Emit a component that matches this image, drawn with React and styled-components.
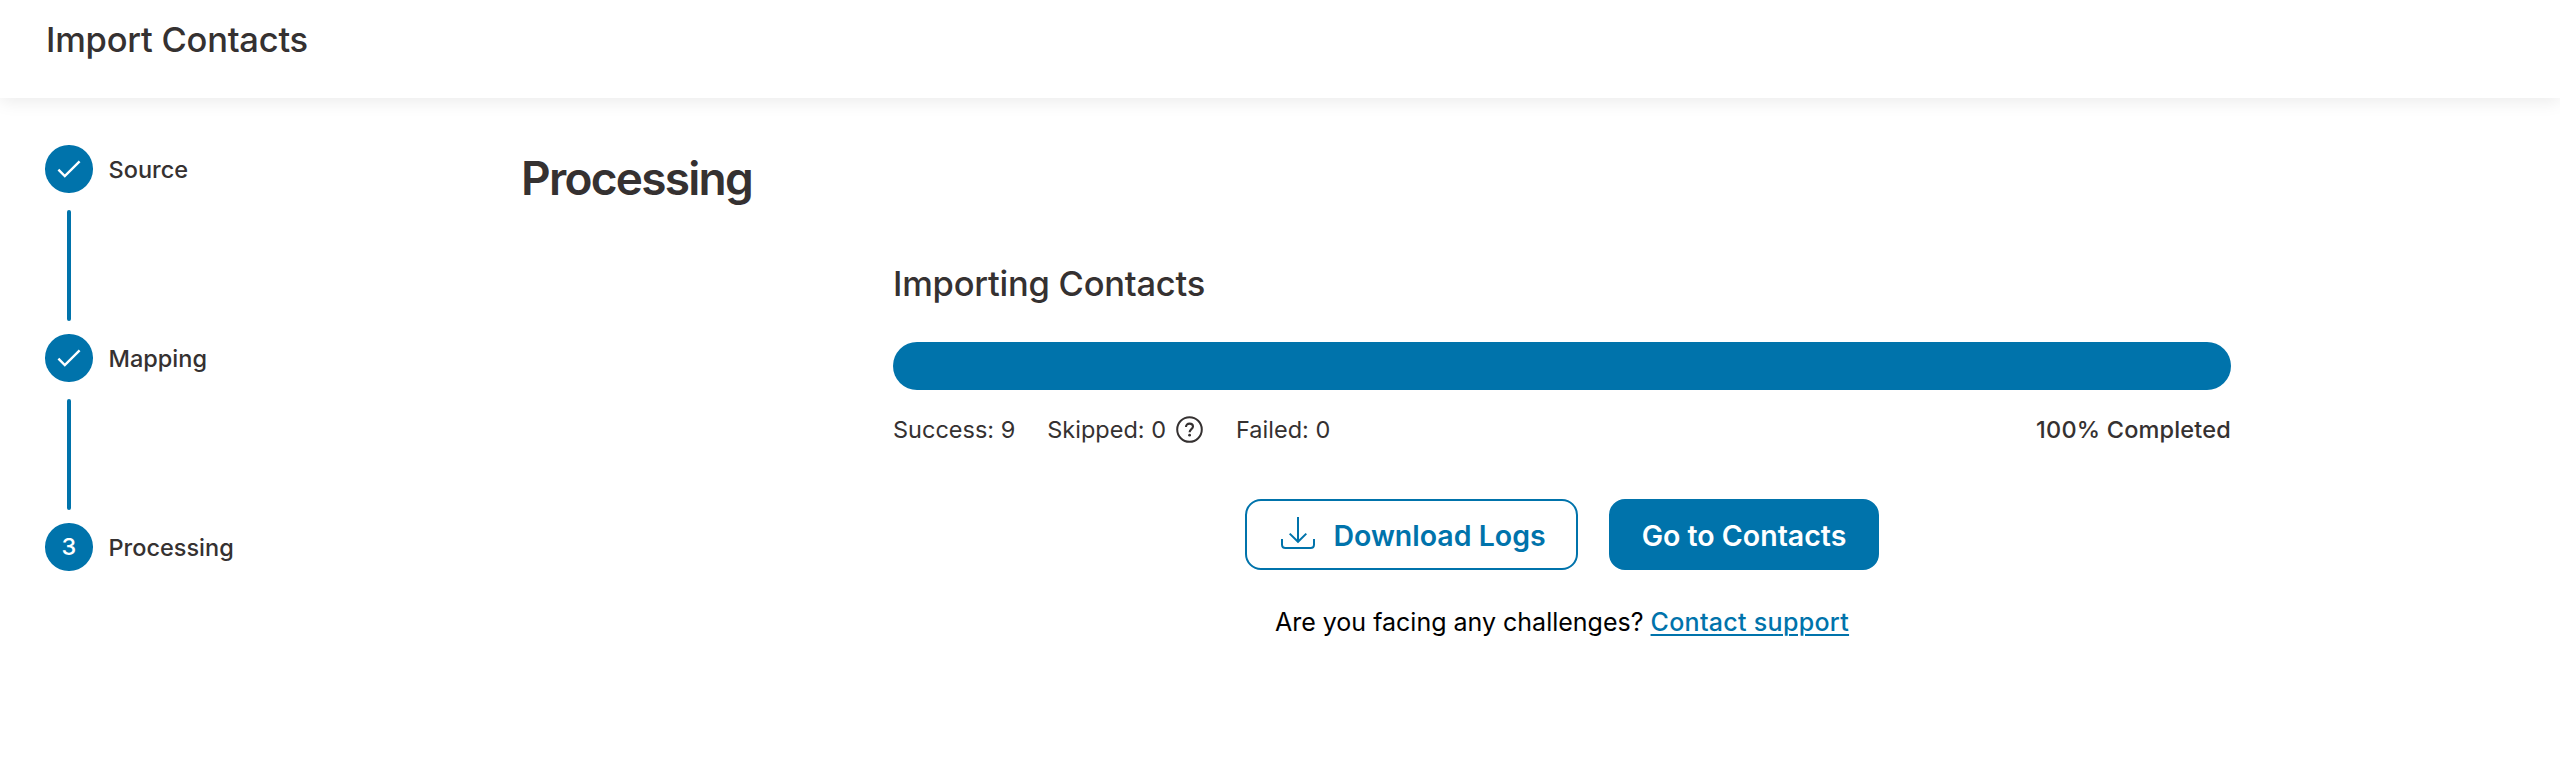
import React from 'react';
import styled, { createGlobalStyle } from 'styled-components';

const GlobalStyle = createGlobalStyle`
    * {
        box-sizing: border-box;
    }

    body {
        margin: 0;
        background: #fff;
        color: #353131;
        font-family: Inter, "Liberation Sans", sans-serif;
    }
`

const Page = styled.div`
    min-height: 765px;
    overflow: hidden;
`

const Header = styled.header`
    height: 98px;
    padding: 16px 46px;
    background: #fff;
    box-shadow: 0 4px 16px rgba(0, 0, 0, 0.08);
`

const Title = styled.h1`
    margin: 0;
    font-size: 34.5px;
    font-weight: 500;
    line-height: 48px;
    letter-spacing: -0.23px;
`

const Body = styled.div`
    display: flex;
    padding: 47px 0 0 45px;
`

const Steps = styled.div`
    flex: none;
    width: 476px;
    display: flex;
    flex-direction: column;
`

const Step = styled.div`
    display: flex;
    align-items: center;
    gap: 16px;
    height: 47.5px;
`

const StepCircle = styled.div`
    display: flex;
    align-items: center;
    justify-content: center;
    width: 47.5px;
    height: 47.5px;
    border-radius: 50%;
    background: #0073ab;
    color: #fff;
    font-size: 23.5px;
    font-weight: 500;
`

const StepLabel = styled.span`
    padding-top: 2px;
    font-size: 23.5px;
    font-weight: 500;
    line-height: 32px;
`

const StepLine = styled.div`
    width: 4px;
    height: 110.5px;
    margin: 17.5px 0 13.5px 22px;
    border-radius: 2px;
    background: #0073ab;
`

const Main = styled.main`
    flex: none;
    width: 2082px;
`

const Heading = styled.h2`
    margin: 0;
    font-size: 46px;
    font-weight: 600;
    line-height: 66px;
    letter-spacing: -1.75px;
`

const ImportPanel = styled.section`
    width: 1338px;
    margin: 50px auto 0;
    display: flex;
    flex-direction: column;
`

const PanelTitle = styled.h3`
    margin: 0;
    font-size: 34.5px;
    font-weight: 500;
    line-height: 46px;
    letter-spacing: -0.23px;
`

const ProgressTrack = styled.div`
    height: 47.5px;
    margin-top: 35px;
    border-radius: 24px;
    background: #e5eef3;
    overflow: hidden;
`

const ProgressBar = styled.div`
    height: 100%;
    background: #0073ab;
`

const Stats = styled.div`
    display: flex;
    align-items: center;
    gap: 32px;
    height: 32px;
    margin-top: 24px;
    font-size: 23.5px;
    line-height: 32px;
`

const Stat = styled.div`
    display: flex;
    align-items: center;
    gap: 10px;
`

const HelpBadge = styled.span`
    display: flex;
    margin-right: 1px;
`

const Completed = styled.div`
    margin-left: auto;
    font-weight: 500;
    letter-spacing: 0.18px;
`

const Actions = styled.div`
    display: flex;
    justify-content: center;
    gap: 31.5px;
    margin-top: 53.5px;
`

const Button = styled.button`
    display: flex;
    align-items: center;
    justify-content: center;
    gap: 18px;
    width: ${props => props.$width}px;
    height: 71px;
    padding: 3px 0 0;
    border: 2px solid #0073ab;
    border-radius: 16px;
    background: ${props => props.$primary ? '#0073ab' : '#fff'};
    color: ${props => props.$primary ? '#fff' : '#0073ab'};
    font-family: inherit;
    font-size: 28.5px;
    font-weight: 600;
    line-height: 40px;

    svg {
        margin: -6px 0 0 4px;
    }
`

const Support = styled.p`
    margin: 34px 0 0;
    color: #000;
    font-size: 25px;
    line-height: 36px;
    text-align: center;
`

const SupportLink = styled.a`
    color: #0073ab;
    font-weight: 500;
    letter-spacing: 0.3px;
    text-decoration: underline;
    text-decoration-thickness: 2px;
    text-underline-offset: 2.5px;
`

const CheckIcon = () => (
    <svg width="24" height="18" viewBox="0 0 24 18" fill="none">
        <path d="M1.4 9.6L7.8 16L22.6 1.4" stroke="#fff" strokeWidth="2.4"/>
    </svg>
);

const HelpIcon = () => (
    <svg width="27" height="27" viewBox="0 0 27 27" fill="none" stroke="#353131" strokeWidth="2">
        <circle cx="13.5" cy="13.5" r="12.3"/>
        <path d="M10 10.9C10 8.7 11.5 7.6 13.5 7.6C15.5 7.6 17 8.8 17 10.6C17 13.2 13.6 13.2 13.6 16.3" strokeWidth="2.1"/>
        <circle cx="13.6" cy="19.2" r="1.4" fill="#353131" stroke="none"/>
    </svg>
);

const DownloadIcon = () => (
    <svg width="34" height="32" viewBox="0 0 34 32" fill="none" stroke="#0073ab" strokeWidth="2">
        <path d="M17 0V25M8.7 16.6L17 24.8L25.3 16.6"/>
        <path d="M1 22V27.5C1 29.6 2.4 31 4.5 31H29.5C31.6 31 33 29.6 33 27.5V22"/>
    </svg>
);

const steps = [
    { label: 'Source', done: true },
    { label: 'Mapping', done: true },
    { label: 'Processing', done: false },
];

const progress = 100;

const renderStep = (step, index) => (
    <React.Fragment key={step.label}>
        {index > 0 && <StepLine/>}
        <Step>
            <StepCircle>{step.done ? <CheckIcon/> : index + 1}</StepCircle>
            <StepLabel>{step.label}</StepLabel>
        </Step>
    </React.Fragment>
);

export default function App() {
    return (
        <Page>
            <GlobalStyle/>
            <Header>
                <Title>Import Contacts</Title>
            </Header>
            <Body>
                <Steps>{steps.map(renderStep)}</Steps>
                <Main>
                    <Heading>Processing</Heading>
                    <ImportPanel>
                        <PanelTitle>Importing Contacts</PanelTitle>
                        <ProgressTrack>
                            <ProgressBar style={{ width: `${progress}%` }}/>
                        </ProgressTrack>
                        <Stats>
                            <Stat>Success: 9</Stat>
                            <Stat>Skipped: 0 <HelpBadge><HelpIcon/></HelpBadge></Stat>
                            <Stat>Failed: 0</Stat>
                            <Completed>{progress}% Completed</Completed>
                        </Stats>
                        <Actions>
                            <Button $width={332.5}>
                                <DownloadIcon/>
                                Download Logs
                            </Button>
                            <Button $width={269.5} $primary>Go to Contacts</Button>
                        </Actions>
                        <Support>
                            Are you facing any challenges? <SupportLink href="#">Contact support</SupportLink>
                        </Support>
                    </ImportPanel>
                </Main>
            </Body>
        </Page>
    );
}
